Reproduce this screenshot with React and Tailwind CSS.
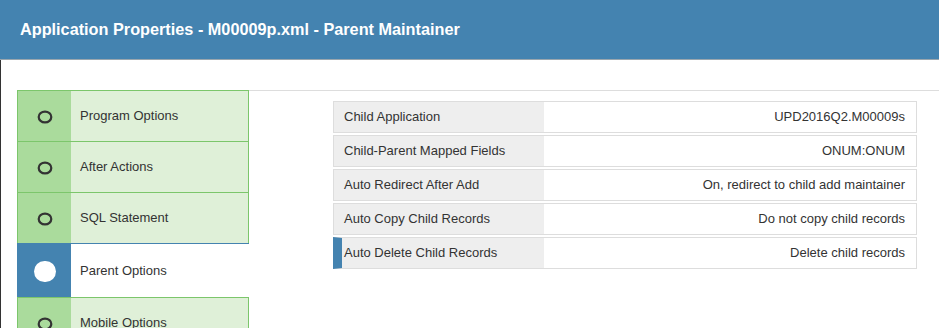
import React from "react";

const navItems = [
  { label: "Program Options" },
  { label: "After Actions" },
  { label: "SQL Statement" },
  { label: "Parent Options", active: true },
  { label: "Mobile Options" },
];

const rows = [
  ["Child Application", "UPD2016Q2.M00009s"],
  ["Child-Parent Mapped Fields", "ONUM:ONUM"],
  ["Auto Redirect After Add", "On, redirect to child add maintainer"],
  ["Auto Copy Child Records", "Do not copy child records"],
  ["Auto Delete Child Records", "Delete child records", true],
];

function HollowCircle() {
  return (
    <svg width="16" height="14" viewBox="0 0 16 14">
      <ellipse cx="8" cy="7" rx="6.3" ry="5.4" fill="none" stroke="#333" strokeWidth="2.2" />
    </svg>
  );
}

export default function App() {
  return (
    <div className="w-[939px] h-[328px] overflow-hidden bg-white font-['Liberation_Sans',Arial,sans-serif] text-[#333]">
      <div className="h-[60px] bg-[#4483b0] border-b border-[#9aa6ae] flex items-center pl-5 pb-[1px]">
        <h1 className="text-white font-bold text-[16.25px]">
          Application Properties - M00009p.xml - Parent Maintainer
        </h1>
      </div>
      <div className="flex h-[268px] border-l border-[#333] pt-[30px] pl-4">
        <div className="w-[232px] shrink-0 flex flex-col">
          {navItems.map((it) =>
            it.active ? (
              <div key={it.label} className="flex h-[54px] shrink-0 border-t border-[#4483b0]">
                <div className="w-[54px] bg-[#4483b0] flex items-center justify-center">
                  <div className="w-[22px] h-[21px] rounded-full bg-white mt-[1px] ml-[2px]" />
                </div>
                <div className="flex-1 bg-white flex items-center pl-[9px] text-[13px]">{it.label}</div>
              </div>
            ) : (
              <div
                key={it.label}
                className="flex h-[51px] shrink-0 border-t border-l border-r border-[#7cc66b]"
              >
                <div className="w-[53px] bg-[#aadb9c] flex items-center justify-center pt-[1px]">
                  <HollowCircle />
                </div>
                <div className="flex-1 bg-[#dff0d8] flex items-center pl-[9px] text-[13px]">{it.label}</div>
              </div>
            )
          )}
        </div>
        <div className="flex-1 border-t border-[#dddddd] pl-[84px] pr-[22px] pt-[10px]">
          <div className="flex flex-col gap-[2px]">
            {rows.map(([k, v, active]) => (
              <div
                key={k}
                className={
                  "flex h-[32px] border border-[#dddddd] text-[13px] " +
                  (active ? "border-l-[9px] border-l-[#4483b0]" : "")
                }
              >
                <div
                  className={
                    "bg-[#eeeeee] flex items-center " +
                    (active ? "w-[202px] pl-[2px]" : "w-[210px] pl-[10px]")
                  }
                >
                  {k}
                </div>
                <div className="flex-1 flex items-center justify-end pr-[11px]">{v}</div>
              </div>
            ))}
          </div>
        </div>
      </div>
    </div>
  );
}
